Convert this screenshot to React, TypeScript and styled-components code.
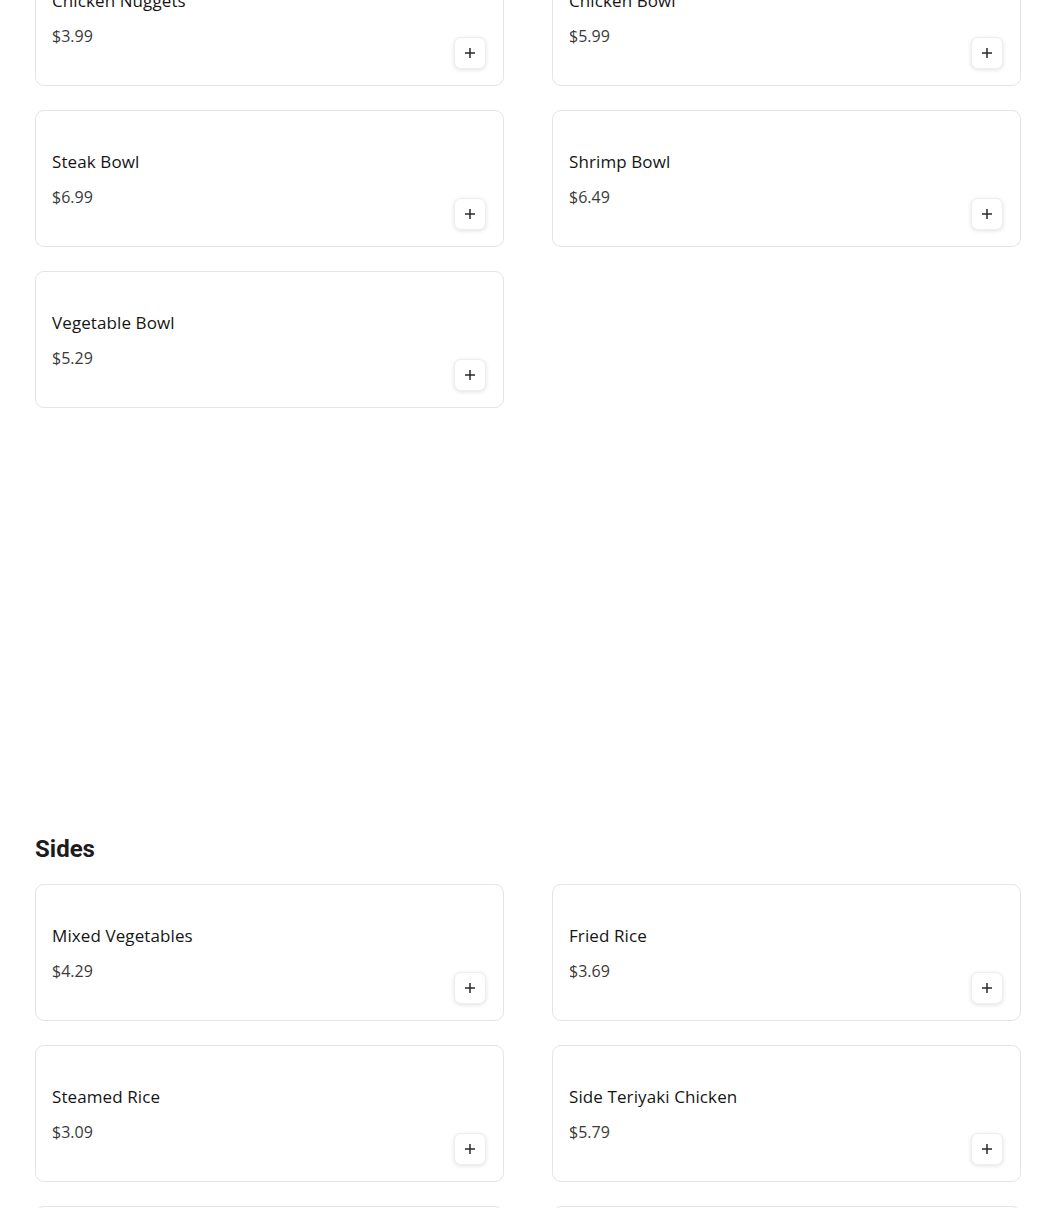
import React from "react";
import styled, { createGlobalStyle } from "styled-components";

const Global = createGlobalStyle`
  html, body { margin: 0; padding: 0; background: #ffffff; }
  body { font-family: "Open Sans", "Noto Sans", sans-serif; color: #1f1f1f; }
`;

const Page = styled.div`
  width: 986px;
  padding: 0 29px 0 35px;
  margin-top: -51px;
`;

const Section = styled.section<{ $tail?: number }>`
  margin-bottom: ${(p) => p.$tail ?? 0}px;
`;

const Heading = styled.h2`
  font-family: Roboto, "Liberation Sans", sans-serif;
  font-weight: 700;
  font-size: 24px;
  line-height: 29px;
  color: #1c1c1c;
  margin: 0 0 20px 0;
`;

const Grid = styled.div`
  display: grid;
  grid-template-columns: 1fr 1fr;
  column-gap: 48px;
  row-gap: 24px;
`;

const Card = styled.div`
  box-sizing: border-box;
  height: 137px;
  border: 1px solid #e4e4e4;
  border-radius: 9px;
  padding: 16px 17px 16px 16px;
  display: flex;
  justify-content: space-between;
  align-items: center;
  background: #fff;
`;

const Info = styled.div`
  display: flex;
  flex-direction: column;
  gap: 12px;
`;

const Name = styled.div`
  font-family: "Open Sans", "Noto Sans", sans-serif;
  font-weight: 500;
  font-size: 17px;
  line-height: 24px;
  letter-spacing: 0.1px;
  color: #151515;
`;

const Price = styled.div`
  font-family: "Open Sans", "Noto Sans", sans-serif;
  font-size: 16px;
  line-height: 22px;
  color: #3a3a3a;
`;

const AddButton = styled.button`
  align-self: flex-end;
  width: 32px;
  height: 32px;
  box-sizing: border-box;
  border: 1px solid #eeeeee;
  border-radius: 7px;
  background: #fff;
  box-shadow: 0 1px 4px rgba(0, 0, 0, 0.12);
  display: flex;
  align-items: center;
  justify-content: center;
  padding: 0;
  cursor: pointer;
`;

const Plus = () => (
  <svg width="10" height="10" viewBox="0 0 10 10">
    <path d="M5 0v10M0 5h10" stroke="#2a2a2a" strokeWidth="1.5" />
  </svg>
);

type Item = { name: string; price: string };

const Item = ({ item }: { item: Item }) => (
  <Card>
    <Info>
      <Name>{item.name}</Name>
      <Price>{item.price}</Price>
    </Info>
    <AddButton aria-label={`Add ${item.name}`}>
      <Plus />
    </AddButton>
  </Card>
);

const mains: Item[] = [
  { name: "Chicken Nuggets", price: "$3.99" },
  { name: "Chicken Bowl", price: "$5.99" },
  { name: "Steak Bowl", price: "$6.99" },
  { name: "Shrimp Bowl", price: "$6.49" },
  { name: "Vegetable Bowl", price: "$5.29" },
];

const sides: Item[] = [
  { name: "Mixed Vegetables", price: "$4.29" },
  { name: "Fried Rice", price: "$3.69" },
  { name: "Steamed Rice", price: "$3.09" },
  { name: "Side Teriyaki Chicken", price: "$5.79" },
  { name: "Egg Rolls", price: "$2.49" },
  { name: "Cream Cheese Rangoon", price: "$2.99" },
];

export default function App() {
  return (
    <>
      <Global />
      <Page>
        <Section $tail={427}>
          <Grid>
            {mains.map((m) => (
              <Item key={m.name} item={m} />
            ))}
          </Grid>
        </Section>
        <Section>
          <Heading>Sides</Heading>
          <Grid>
            {sides.map((m) => (
              <Item key={m.name} item={m} />
            ))}
          </Grid>
        </Section>
      </Page>
    </>
  );
}
